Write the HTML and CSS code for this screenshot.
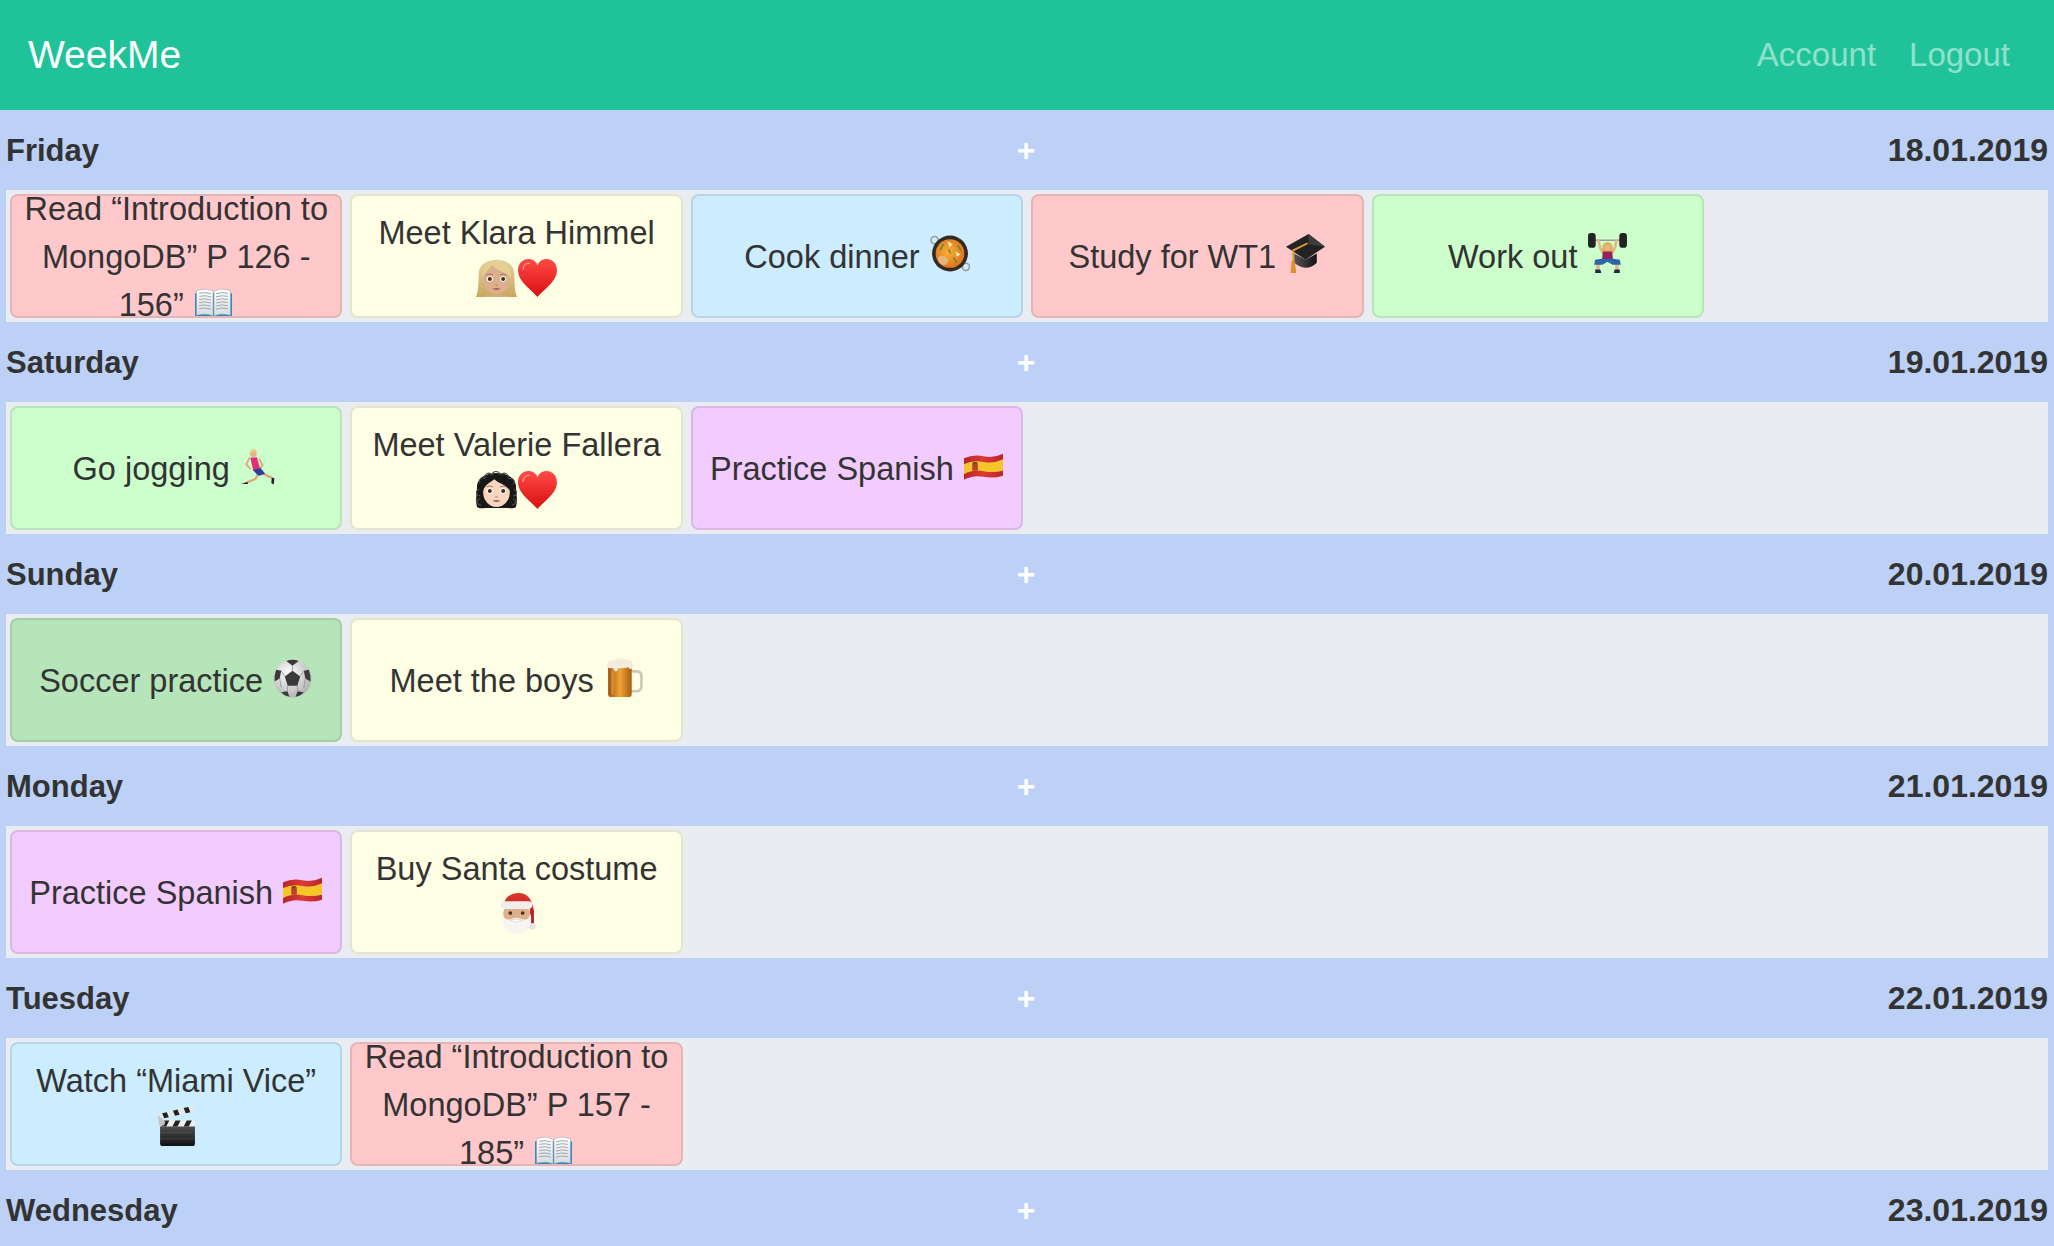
FILE: index.html
```html
<!DOCTYPE html>
<html lang="en">
<head>
    <meta charset="UTF-8">
    <meta name="viewport" content="width=device-width, initial-scale=1.0">
    <title>WeekMe</title>
    <link rel="stylesheet" href="styles.css">
</head>
<body>
    <!-- Emoji sprites, there is no colour emoji font to use -->
    <svg class="sprite" xmlns="http://www.w3.org/2000/svg">
        <defs>
            <linearGradient id="g-page" x1="0" y1="0" x2="0" y2="1"><stop offset="0" stop-color="#fff"/><stop offset="1" stop-color="#d5dbe0"/></linearGradient>
            <linearGradient id="g-heart" x1="0" y1="0" x2="0" y2="1"><stop offset="0" stop-color="#ff4a45"/><stop offset="1" stop-color="#d80f10"/></linearGradient>
            <linearGradient id="g-blonde" x1="0" y1="0" x2="0" y2="1"><stop offset="0" stop-color="#e3d199"/><stop offset="1" stop-color="#c9a75f"/></linearGradient>
            <radialGradient id="g-paella" cx=".45" cy=".45" r=".6"><stop offset="0" stop-color="#f7b23a"/><stop offset="1" stop-color="#dd6f1c"/></radialGradient>
            <linearGradient id="g-cap" x1="0" y1="0" x2="1" y2="0"><stop offset="0" stop-color="#555"/><stop offset="1" stop-color="#111"/></linearGradient>
            <radialGradient id="g-ball" cx=".4" cy=".35" r=".75"><stop offset="0" stop-color="#fff"/><stop offset="1" stop-color="#a9a9a9"/></radialGradient>
            <linearGradient id="g-beer" x1="0" y1="0" x2="1" y2="0"><stop offset="0" stop-color="#9c4f10"/><stop offset=".5" stop-color="#f0a535"/><stop offset="1" stop-color="#a85a12"/></linearGradient>
            <linearGradient id="g-hat" x1="0" y1="0" x2="0" y2="1"><stop offset="0" stop-color="#e0362c"/><stop offset="1" stop-color="#a9161a"/></linearGradient>
            <linearGradient id="g-clap" x1="0" y1="0" x2="0" y2="1"><stop offset="0" stop-color="#555"/><stop offset="1" stop-color="#111"/></linearGradient>
            <linearGradient id="g-flag" x1="0" y1="0" x2="1" y2="0"><stop offset="0" stop-color="#b9242b"/><stop offset=".5" stop-color="#dc3a34"/><stop offset="1" stop-color="#b9242b"/></linearGradient>
        </defs>

        <symbol id="book" viewBox="0 0 40 40">
            <path d="M2 12V35H17L20 36.500 23 35H38V12Z" fill="#2f86bd"/>
            <path d="M3.500 9.500C9 7.500 15 7.500 19.500 10V34C15 32 9 32 3.500 33.500Z" fill="url(#g-page)" stroke="#9aa5ad" stroke-width=".5"/>
            <path d="M36.500 9.500C31 7.500 25 7.500 20.500 10V34C25 32 31 32 36.500 33.500Z" fill="url(#g-page)" stroke="#9aa5ad" stroke-width=".5"/>
            <path d="M6 12Q12 10.500 17.500 12.500M6 15Q12 13.500 17.500 15.500M6 18Q12 16.500 17.500 18.500M6 21Q12 19.500 17.500 21.500M6 24Q12 22.500 17.500 24.500M6 27Q12 25.500 17.500 27.500M34 12Q28 10.500 22.500 12.500M34 15Q28 13.500 22.500 15.500M34 18Q28 16.500 22.500 18.500M34 21Q28 19.500 22.500 21.500M34 24Q28 22.500 22.500 24.500M34 27Q28 25.500 22.500 27.500" fill="none" stroke="#8d959b" stroke-width=".8"/>
        </symbol>

        <symbol id="heart" viewBox="0 0 40 40">
            <path d="M20 39C14 32 1 24 1 13 1 6 6 2 11 2 15 2 18.500 4 20 8 21.500 4 25 2 29 2 34 2 39 6 39 13 39 24 26 32 20 39Z" fill="url(#g-heart)"/>
            <path d="M6 12C6 8.500 8.500 6 12 6" fill="none" stroke="#ff8d86" stroke-width="1.500" stroke-linecap="round"/>
        </symbol>

        <symbol id="face" viewBox="0 0 40 40">
            <ellipse cx="13.500" cy="21.500" rx="3" ry="2.600" fill="#fff"/>
            <ellipse cx="26.500" cy="21.500" rx="3" ry="2.600" fill="#fff"/>
            <circle cx="13.500" cy="21.500" r="2" fill="#4a2d14"/>
            <circle cx="26.500" cy="21.500" r="2" fill="#4a2d14"/>
            <path d="M10 17.500Q13.500 15.500 16.500 17.500M23.500 17.500Q26.500 15.500 30 17.500" fill="none" stroke="#8c6a48" stroke-width=".8"/>
            <path d="M19 27Q20 28 21 27" fill="none" stroke="#b27b5c" stroke-width="1"/>
            <path d="M16 31Q20 29.500 24 31Q20 33.500 16 31Z" fill="#a8614f"/>
        </symbol>

        <symbol id="woman-blonde" viewBox="0 0 40 40">
            <path d="M0 39C3 32 2 22 3 14 5 -1 35 -1 37 14 38 22 37 32 40 39Z" fill="url(#g-blonde)"/>
            <path d="M8 38Q20 36 32 38V39H8Z" fill="#d9ad88"/>
            <ellipse cx="20" cy="22" rx="13" ry="14.500" fill="#dcb08c"/>
            <path d="M6 20C8 15 12 13 16 8 21 14 29 14 34 21 35 10 28 5 20 5 11 5 5 11 6 20Z" fill="#e4cf91"/>
            <use href="#face" width="40" height="40"/>
        </symbol>

        <symbol id="woman-dark" viewBox="0 0 40 40">
            <path d="M1 37C-1 30 1 24 1 16 3 0 37 0 39 16 39 24 41 30 39 37 36 39 33 38 30 38H10C7 38 4 39 1 37Z" fill="#181818"/>
            <path d="M4 14a3 3 0 0 1 5-4M9 9a3 3 0 0 1 6-3M16 6a3 3 0 0 1 7 0M25 6a3 3 0 0 1 6 3M32 10a3 3 0 0 1 4 5M3 20a3 3 0 0 0 1 6M37 20a3 3 0 0 1-1 6M4 29a3 3 0 0 0 1 6M36 29a3 3 0 0 1-1 6" fill="none" stroke="#4c4c4c" stroke-width="1"/>
            <ellipse cx="20" cy="23" rx="13" ry="14" fill="#f5d6c0"/>
            <path d="M7 21C9 15 14 13 18 10 22 14 29 15 33 21 33 12 28 8 20 8 12 8 7 12 7 21Z" fill="#181818"/>
            <use href="#face" width="40" height="40"/>
        </symbol>

        <symbol id="paella" viewBox="0 0 40 40">
            <circle cx="5.500" cy="7" r="3.500" fill="none" stroke="#9a9a9a" stroke-width="1.500"/>
            <circle cx="36" cy="33" r="3.500" fill="none" stroke="#9a9a9a" stroke-width="1.500"/>
            <circle cx="20.500" cy="20" r="17.500" fill="#322a25"/>
            <circle cx="20.500" cy="20" r="14" fill="url(#g-paella)"/>
            <path d="M9 24C11 21 16 22 18 25 20 28 17 32 13 31 10 30 8 27 9 24Z" fill="#e8b27a"/>
            <path d="M14 11L11 17M28 12L31 17M24 24L27 29M19 16L21 20" fill="none" stroke="#5d8a36" stroke-width="1.500"/>
            <path d="M18 8L23 11 20 14ZM26 18L31 21 27 23Z" fill="#fbeeb8"/>
        </symbol>

        <symbol id="cap" viewBox="0 0 40 40">
            <path d="M9 20V29Q21 39 31 29V20L20 26Z" fill="url(#g-cap)"/>
            <path d="M23 1L39 13.500 20 26 1 13.500Z" fill="#222"/>
            <path d="M23 1L39 13.500 23 11Z" fill="#3d3d3d"/>
            <path d="M22 10L8 17V28" fill="none" stroke="#e69f2c" stroke-width="1.800"/>
            <path d="M6.500 27H9.500L11 39H5.500Z" fill="#dc9026"/>
        </symbol>

        <symbol id="lifter" viewBox="0 0 40 40">
            <path d="M4 7H36" stroke="#9a9a9a" stroke-width="1.500"/>
            <rect x="1" y="0" width="7.500" height="14.500" rx="3" fill="#222"/>
            <rect x="31.500" y="0" width="7.500" height="14.500" rx="3" fill="#222"/>
            <path d="M11 7L13 15 16 20M29 7L27 15 24 20" fill="none" stroke="#e8b48a" stroke-width="2.600" stroke-linecap="round" stroke-linejoin="round"/>
            <path d="M15 14C15 7.500 25 7.500 25 14 25 17 26 19 25 20H15C14 19 15 17 15 14Z" fill="#d9b552"/>
            <circle cx="20" cy="14.500" r="3" fill="#e8b48a"/>
            <path d="M15.500 18H24.500L25.500 28H14.500Z" fill="#97205f"/>
            <path d="M9 30H12.500V37H9ZM27.500 30H31V37H27.500Z" fill="#e8b48a"/>
            <path d="M14.500 25H25.500L32 26 33 31H25L20 28 15 31H7L8 26Z" fill="#2c65a8"/>
            <path d="M8 35.500H13L14 39H8ZM27 35.500H32V39H26Z" fill="#1d2e42"/>
        </symbol>

        <symbol id="runner" viewBox="0 0 40 40">
            <path d="M10 13L7 19 11 23M20 14L23 20 19 24" fill="none" stroke="#dcaa80" stroke-width="1.800" stroke-linecap="round" stroke-linejoin="round"/>
            <path d="M19 28L16 33 7 37M23 28L30 31 33 33" fill="none" stroke="#dcaa80" stroke-width="2.400" stroke-linecap="round" stroke-linejoin="round"/>
            <circle cx="14" cy="8.500" r="3.300" fill="#e2b58d"/>
            <path d="M10.500 8C10 3.500 16 2.500 17.500 6L14 6.500Z" fill="#e9cf8a"/>
            <path d="M11 12.500L17.500 12 20.500 23 14 25Z" fill="#e42d78"/>
            <path d="M13.500 24.500L21 22.500 25.500 28 19.500 30 17.500 28.500Z" fill="#2c3f9c"/>
            <path d="M2 38L8 36 9 38ZM32 32L34.500 32.500 34 38.500 31.500 37Z" fill="#1d2333"/>
        </symbol>

        <symbol id="flag" viewBox="0 0 40 40">
            <path d="M1 13Q10 9 20 11T39 8.500V30Q30 33 20 31T1 34Z" fill="url(#g-flag)"/>
            <path d="M1 18.500Q10 14.500 20 16.500T39 14V25Q30 27.500 20 25.500T1 28.500Z" fill="#f5c52c"/>
            <rect x="9" y="17" width="5.500" height="8" rx="1.200" fill="#b5432c"/>
            <path d="M10 16.500H13.500V18.500H10Z" fill="#7d4a1f"/>
        </symbol>

        <symbol id="ball" viewBox="0 0 40 40">
            <circle cx="20" cy="21" r="18.500" fill="url(#g-ball)"/>
            <path d="M20 13.500L27.500 19 24.700 28H15.300L12.500 19Z" fill="#3a3a3a"/>
            <path d="M14 4Q20 1.500 26 4L20 8.500ZM4 12.500Q2 18 2.500 24L7.500 21 9 13.500ZM36 12.500Q38 18 37.500 24L32.500 21 31 13.500ZM9 34.500L15 33.500 17 38.800Q12 38 9 34.500ZM31 34.500L25 33.500 23 38.800Q28 38 31 34.500Z" fill="#3a3a3a"/>
            <path d="M20 8.500V13.500M9 13.500L12.500 19M31 13.500L27.500 19M15.300 28L15 33.500M24.700 28L25 33.500M7.500 21L9 30M32.500 21L31 30" stroke="#8a8a8a" stroke-width=".7"/>
        </symbol>

        <symbol id="beer" viewBox="0 0 40 40">
            <path d="M27 14H33C36.500 14 37.500 16 37.500 19V28C37.500 32 35 33.500 32 33.500H27" fill="none" stroke="#cfc7b4" stroke-width="2.500"/>
            <rect x="5" y="8" width="23" height="31" rx="3" fill="url(#g-beer)"/>
            <rect x="8" y="12" width="3" height="25" rx="1.500" fill="#d58a2c"/>
            <path d="M4 10C3 5 7 2 11 3 14 .500 21 .500 24 3 28 3 30 6 29 9 28 13 25 12 25 10 22 11 18 11 15 11 14 15 11 15 10 11 7 11 5 11 4 10Z" fill="#f3ebdc"/>
        </symbol>

        <symbol id="santa" viewBox="0 0 40 40">
            <path d="M8 12C8 3 16 0 22 0 30 0 35 5 37 17V32H33V14Z" fill="url(#g-hat)"/>
            <circle cx="35.500" cy="32.500" r="3.300" fill="#e4e4e4"/>
            <ellipse cx="20" cy="20" rx="13" ry="10" fill="#dcb08a"/>
            <rect x="4.500" y="8" width="31" height="7.500" rx="3.700" fill="#f0eeea"/>
            <path d="M6 20C6 24 4 30 9 35 14 41 26 41 31 35 36 30 34 24 34 20 32 26 29 27 24 25 22 24 18 24 16 25 11 27 8 26 6 20Z" fill="#f7f5f2"/>
            <circle cx="14" cy="19.500" r="1.800" fill="#4c2f17"/>
            <circle cx="26" cy="19.500" r="1.800" fill="#4c2f17"/>
            <path d="M14 27Q20 24 26 27Q20 29.500 14 27Z" fill="#fff" stroke="#c9c4bd" stroke-width=".5"/>
        </symbol>

        <symbol id="clapper" viewBox="0 0 40 40">
            <rect x="4" y="19" width="34" height="21" rx="2.500" fill="url(#g-clap)"/>
            <path d="M5 27H37M5 33H37" stroke="#555" stroke-width=".6"/>
            <path d="M4 15H38V21H4Z" fill="#efefef"/>
            <path d="M8 15L5 21H10L13 15ZM19 15L16 21H21L24 15ZM30 15L27 21H32L35 15Z" fill="#222"/>
            <path d="M2 9L37 1 38 6 3 14Z" fill="#e8e8e8"/>
            <path d="M6 8L8 13 12.500 12 10.500 7ZM16.500 5.500L18.500 10.500 23 9.500 21 4.500ZM27 3L29 8 33.500 7 31.500 2Z" fill="#222"/>
            <path d="M2 10L9 16 8 20 3 20Z" fill="#c2c2c2"/>
        </symbol>
    </svg>

    <nav class="navbar">
        <a class="brand" href="#">WeekMe</a>
        <div class="nav-links">
            <a class="nav-link" href="#">Account</a>
            <a class="nav-link" href="#">Logout</a>
        </div>
    </nav>

    <div class="day-head">
        <span class="day-name">Friday</span>
        <span class="add">+</span>
        <span class="day-date">18.01.2019</span>
    </div>
    <div class="day-tasks">
        <div class="task task-red"><p>Read “Introduction to MongoDB” P 126 - 156” <svg class="emoji"><use href="#book"/></svg></p></div>
        <div class="task task-yellow"><p>Meet Klara Himmel <svg class="emoji"><use href="#woman-blonde"/></svg><svg class="emoji"><use href="#heart"/></svg></p></div>
        <div class="task task-blue"><p>Cook dinner <svg class="emoji"><use href="#paella"/></svg></p></div>
        <div class="task task-red"><p>Study for WT1 <svg class="emoji"><use href="#cap"/></svg></p></div>
        <div class="task task-green"><p>Work out <svg class="emoji"><use href="#lifter"/></svg></p></div>
    </div>

    <div class="day-head">
        <span class="day-name">Saturday</span>
        <span class="add">+</span>
        <span class="day-date">19.01.2019</span>
    </div>
    <div class="day-tasks">
        <div class="task task-green"><p>Go jogging <svg class="emoji"><use href="#runner"/></svg></p></div>
        <div class="task task-yellow"><p>Meet Valerie Fallera <svg class="emoji"><use href="#woman-dark"/></svg><svg class="emoji"><use href="#heart"/></svg></p></div>
        <div class="task task-purple"><p>Practice Spanish <svg class="emoji"><use href="#flag"/></svg></p></div>
    </div>

    <div class="day-head">
        <span class="day-name">Sunday</span>
        <span class="add">+</span>
        <span class="day-date">20.01.2019</span>
    </div>
    <div class="day-tasks">
        <div class="task task-done"><p>Soccer practice <svg class="emoji"><use href="#ball"/></svg></p></div>
        <div class="task task-yellow"><p>Meet the boys <svg class="emoji"><use href="#beer"/></svg></p></div>
    </div>

    <div class="day-head">
        <span class="day-name">Monday</span>
        <span class="add">+</span>
        <span class="day-date">21.01.2019</span>
    </div>
    <div class="day-tasks">
        <div class="task task-purple"><p>Practice Spanish <svg class="emoji"><use href="#flag"/></svg></p></div>
        <div class="task task-yellow"><p>Buy Santa costume <svg class="emoji"><use href="#santa"/></svg></p></div>
    </div>

    <div class="day-head">
        <span class="day-name">Tuesday</span>
        <span class="add">+</span>
        <span class="day-date">22.01.2019</span>
    </div>
    <div class="day-tasks">
        <div class="task task-blue"><p>Watch “Miami Vice” <svg class="emoji"><use href="#clapper"/></svg></p></div>
        <div class="task task-red"><p>Read “Introduction to MongoDB” P 157 - 185” <svg class="emoji"><use href="#book"/></svg></p></div>
    </div>

    <div class="day-head">
        <span class="day-name">Wednesday</span>
        <span class="add">+</span>
        <span class="day-date">23.01.2019</span>
    </div>
</body>
</html>
```

FILE: styles.css
```css
html, body {
    height: 100%;
    overflow: hidden;
}
body {
    margin: 0;
    background-color: #bcd1f5;
    color: #333;
    font-family: "Liberation Sans", Arial, sans-serif;
    font-size: 32px;
    line-height: 48px;
}
.sprite {
    display: block;
    width: 0;
    height: 0;
}
.navbar {
    display: flex;
    justify-content: space-between;
    align-items: center;
    height: 110px;
    padding: 0 44px 0 28px;
    background-color: #20c399;
}
.brand {
    color: #fff;
    font-size: 39px;
    text-decoration: none;
}
.nav-links {
    display: flex;
    gap: 33px;
    font-size: 33px;
}
.nav-link {
    color: rgba(255, 255, 255, 0.5);
    text-decoration: none;
}
.day-head {
    display: grid;
    grid-template-columns: 1fr auto 1fr;
    align-items: center;
    height: 80px;
    padding: 0 6px;
    font-weight: bold;
}
.day-name {
    padding-top: 2px;
    font-size: 31px;
}
.add {
    margin-right: 2px;
    color: #fff;
}
.day-date {
    text-align: right;
}
.day-tasks {
    display: flex;
    gap: 8px;
    margin: 0 6px;
    padding: 4px;
    background-color: #e9edf2;
}
.task {
    display: flex;
    align-items: center;
    justify-content: center;
    box-sizing: border-box;
    width: 332.4px;
    height: 124px;
    border: 2px solid rgba(0, 0, 0, 0.1);
    border-radius: 8px;
    overflow: hidden;
    text-align: center;
}
.task p {
    margin: 0;
    padding: 2px 10px 0;
    font-size: 32.5px;
}
.emoji {
    width: 41px;
    height: 41px;
    vertical-align: -6px;
}
.task-red { background-color: #ffc9cb; }
.task-yellow { background-color: #ffffe5; }
.task-blue { background-color: #ccecff; }
.task-green { background-color: #ccffcc; }
.task-purple { background-color: #f3ccff; }
.task-done { background-color: #b5e5b9; }
```
